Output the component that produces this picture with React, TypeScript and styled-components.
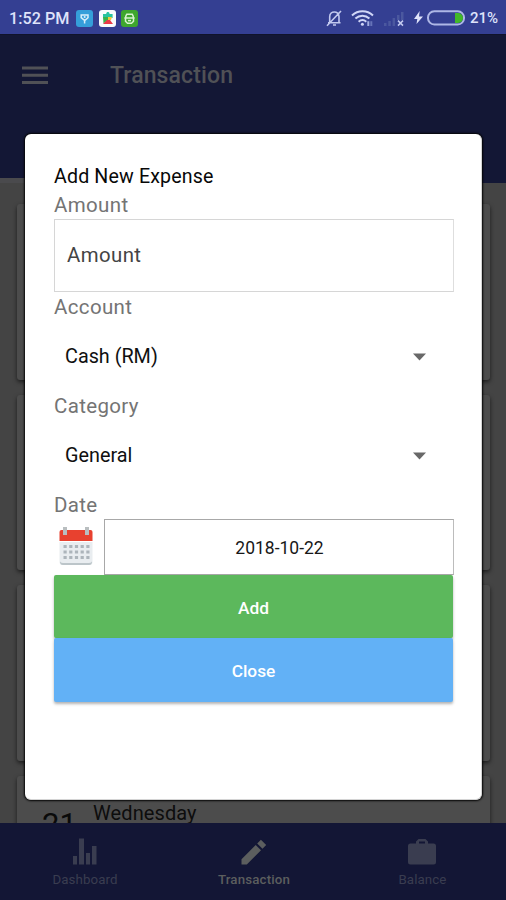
import React from "react";
import styled, { createGlobalStyle } from "styled-components";

const GlobalStyle = createGlobalStyle`
  * { box-sizing: border-box; }
  html, body { margin: 0; padding: 0; }
  body { font-family: Roboto, sans-serif; overflow: hidden; }
`;

const Screen = styled.div`
  position: relative;
  width: 506px;
  height: 900px;
  overflow: hidden;
  display: flex;
  flex-direction: column;
  background: #444444;
`;

const StatusBar = styled.header`
  height: 34px;
  flex: none;
  display: flex;
  align-items: center;
  padding: 2px 8px 0 9px;
  background: #343f92;
  color: #dfe3fa;
`;

const Clock = styled.span`
  width: 67px;
  font-size: 16.2px;
  font-weight: 500;
  white-space: nowrap;
`;

const AppBadge = styled.svg`
  width: 17px;
  height: 17px;
  margin-right: 5.5px;
  flex: none;
`;

const StatusIcons = styled.div`
  margin-left: auto;
  display: flex;
  align-items: center;
`;

const StatusGlyph = styled.svg<{ $w: number; $gap: number }>`
  width: ${(p) => p.$w}px;
  height: 18px;
  margin-right: ${(p) => p.$gap}px;
  flex: none;
`;

const Percent = styled.span`
  width: 28px;
  font-size: 15px;
  font-weight: 500;
  white-space: nowrap;
`;

const AppBar = styled.div`
  height: 149px;
  flex: none;
  display: flex;
  flex-direction: column;
  justify-content: space-between;
  background: #131735;
  border-top: 1px solid #10132b;
`;

const TitleRow = styled.div`
  display: flex;
  align-items: center;
  height: 80px;
  padding-left: 22px;
`;

const MenuIcon = styled.svg`
  width: 26px;
  height: 20px;
  margin-right: 62px;
`;

const Title = styled.h1`
  margin: 0;
  font-size: 23px;
  font-weight: 500;
  letter-spacing: 0.12px;
  color: #505156;
`;

const TabIndicator = styled.div`
  width: 253px;
  height: 5px;
  background: #4a4a4d;
`;

const CardList = styled.main`
  flex: 1;
  min-height: 0;
  overflow: hidden;
  display: flex;
  flex-direction: column;
  gap: 15px;
  padding: 21px 16px 0 17px;
`;

const DayCard = styled.section`
  height: 175.5px;
  flex: none;
  display: flex;
  padding: 25px;
  border-radius: 3px;
  background: #4c4c4c;
  box-shadow: 0 2px 4px rgba(0, 0, 0, 0.6);
`;

const DayNumber = styled.span`
  width: 51px;
  font-size: 31px;
  line-height: 48px;
  color: #0a0a0a;
`;

const DayName = styled.span`
  font-size: 20px;
  line-height: 25px;
  letter-spacing: 0.1px;
  color: #0d0d0d;
`;

const BottomNav = styled.nav`
  height: 77px;
  flex: none;
  display: grid;
  grid-template-columns: 85px 1fr 84px;
  background: #131635;
  padding: 0 41.5px 0 42.5px;
`;

const NavItem = styled.div<{ $active?: boolean }>`
  display: flex;
  flex-direction: column;
  align-items: center;
  justify-self: center;
  padding-top: 13px;
  color: ${(p) => (p.$active ? "#5c5e5e" : "#3a3d50")};
  font-size: 13.3px;
  font-weight: ${(p) => (p.$active ? 500 : 400)};
  letter-spacing: ${(p) => (p.$active ? "0.15px" : "0.1px")};
  line-height: 20px;

  svg {
    width: 34px;
    height: 34px;
    display: block;
    fill: currentColor;
  }
`;

const Dialog = styled.div`
  position: absolute;
  left: 25px;
  top: 134px;
  width: 457px;
  height: 666px;
  display: flex;
  flex-direction: column;
  padding: 29px 29px 0;
  background: #fff;
  border: 1px solid #d4d4d4;
  border-width: 0 1px 1px 0;
  border-radius: 6px;
  box-shadow: 0 0 2px 1px #050505;
`;

const DialogTitle = styled.h2`
  margin: 0;
  font-size: 19.6px;
  font-weight: 400;
  line-height: 28px;
  letter-spacing: 0.15px;
  color: #080808;
`;

const Label = styled.label`
  font-size: 20.5px;
  line-height: 28px;
  letter-spacing: 0.35px;
  color: #747474;
`;

const AmountInput = styled.input`
  width: 400px;
  height: 73px;
  margin: 0 0 1px;
  padding: 0 12px 2px;
  border: 1px solid #d6d6d6;
  border-right-color: #dedede;
  border-radius: 0;
  outline: none;
  background: #fff;
  font: 400 20.4px Roboto, sans-serif;
  letter-spacing: 0.4px;
  color: #444;

  &::placeholder {
    color: #444;
    opacity: 1;
  }
`;

const Picker = styled.div`
  display: flex;
  align-items: center;
  justify-content: space-between;
  height: 71px;
  padding: 0 26px 0 11px;
  font-size: 19.8px;
  color: #101010;

  svg {
    width: 13px;
    height: 8px;
    fill: #686868;
  }
`;

const DateRow = styled.div`
  display: flex;
  width: 400px;
  height: 56px;
`;

const CalendarIcon = styled.svg`
  width: 36px;
  height: 42px;
  margin: 7px 10px 0 4px;
  flex: none;
`;

const DateField = styled.div`
  flex: 1;
  display: flex;
  align-items: center;
  justify-content: center;
  padding: 1px 0 0 1px;
  border: 1px solid #a8a8a8;
  border-right-color: #bcbcbc;
  font-size: 17.5px;
  color: #181818;
`;

const ActionButton = styled.button<{ $color: string; $h: number }>`
  width: 399px;
  height: ${(p) => p.$h}px;
  padding: 2px 0 0;
  border: 0;
  border-radius: 2px;
  background: ${(p) => p.$color};
  box-shadow: 0 2px 3px rgba(0, 0, 0, 0.3);
  color: #fff;
  font: 500 17.3px Roboto, sans-serif;
`;

const Caret = () => (
  <svg viewBox="0 0 13 8"><path d="M0 .5h13L6.5 7.5z" /></svg>
);

export default function App() {
  return (
    <>
      <GlobalStyle />
      <Screen>
        <StatusBar>
          <Clock>1:52 PM</Clock>
          <AppBadge viewBox="0 0 17 17">
            <rect width="17" height="17" rx="3" fill="#359fda" />
            <path d="M5.2 5h6.8v2.700L8.700 10.500 5.200 7.700zM8.600 10v3.500" fill="none" stroke="#d9effb" strokeWidth="1.5" />
            <circle cx="8.7" cy="7" r="1" fill="#d9effb" />
          </AppBadge>
          <AppBadge viewBox="0 0 17 17">
            <rect width="17" height="17" rx="3" fill="#f8fbfc" />
            <path d="M4 4h3.200c0-2.600 3.400-2.600 3.400 0h3v4H4z" fill="#27c3a0" />
            <path d="M4 7h5v3l-4.500 3.500z" fill="#36b34a" />
            <path d="M9 7h4l-1 3-3 1z" fill="#f2c53c" />
            <path d="M4 14l4-4h3l3 4z" fill="#e83b48" />
          </AppBadge>
          <AppBadge viewBox="0 0 17 17">
            <rect width="17" height="17" rx="3" fill="#3ea62e" />
            <path d="M4.800 7.600V6.200l1-2h5.400l1 2v1.400M3.300 8h10.400M4.500 8v3.200l2 2h4l2-2V8" fill="none" stroke="#d8f2d0" strokeWidth="1.5" />
            <path d="M7 10.600h3" stroke="#d8f2d0" strokeWidth="1.5" />
          </AppBadge>
          <StatusIcons>
            <StatusGlyph $w={17} $gap={9} viewBox="0 0 17 18" fill="none" stroke="#c2c9ef" strokeWidth="1.6">
              <path d="M4.700 13.200V7.700C4.700 1.500 14 1.500 14 7.700v5.500M3 13.800h12.500M2 16.800L16 2M8 16h3" />
            </StatusGlyph>
            <StatusGlyph $w={23} $gap={10} viewBox="0 0 23 18" fill="none" stroke="#d0d6f7" strokeWidth="2">
              <path d="M1 6.400C7 .8 16 .8 22 6.400M4.400 9.500c4-3.700 10-3.700 14 0M7.600 12.700c2.300-2 5.400-2 7.700 0" />
              <circle cx="11.4" cy="15.2" r="1.5" fill="#d0d6f7" stroke="none" />
              <path d="M17.300 12.200V17" stroke="#a4afe2" />
              <path d="M20.300 12.200V17" stroke="#6673b8" />
            </StatusGlyph>
            <StatusGlyph $w={21} $gap={9} viewBox="0 0 21 18">
              <path d="M0 14h2.500v3H0zM4.300 12h2.500v5H4.300zM8.600 9h2.500v8H8.600zM13 6h2.500v5H13zM17 3h2.500v8H17z" fill="#4b589f" />
              <path d="M14 11.600l5 5M19 11.600l-5 5" stroke="#c2c9ef" strokeWidth="1.5" />
            </StatusGlyph>
            <StatusGlyph $w={9} $gap={4} viewBox="0 0 9 18">
              <path d="M5.700 2L0 10h3.300L2.500 15 9 7.600H5z" fill="#dfe3fa" />
            </StatusGlyph>
            <StatusGlyph $w={38} $gap={5} viewBox="0 0 38 18">
              <rect x="1" y="2.300" width="36" height="13.200" rx="6.300" fill="none" stroke="#aeb7e6" strokeWidth="2" />
              <path d="M28 4h3a5 5 0 0 1 0 10h-3z" fill="#42b928" />
            </StatusGlyph>
            <Percent>21%</Percent>
          </StatusIcons>
        </StatusBar>

        <AppBar>
          <TitleRow>
            <MenuIcon viewBox="0 0 26 20" stroke="#505156" strokeWidth="3">
              <path d="M0 3h26M0 10.300h26M0 17.600h26" />
            </MenuIcon>
            <Title>Transaction</Title>
          </TitleRow>
          <TabIndicator />
        </AppBar>

        <CardList>
          <DayCard />
          <DayCard />
          <DayCard />
          <DayCard>
            <DayNumber>21</DayNumber>
            <DayName>Wednesday</DayName>
          </DayCard>
        </CardList>

        <BottomNav>
          <NavItem>
            <svg viewBox="0 0 34 34"><path d="M5 20h4v8.500H5zM11 2.500h5v26h-5zM18 17h4v11.500h-4zM24 10h4.500v18.500H24z" /></svg>
            Dashboard
          </NavItem>
          <NavItem $active>
            <svg viewBox="0 0 34 34"><path d="M4.500 23.200V28.500h5.300L24 14.300 18.700 9zM20.200 7.500l5.300 5.300 3.700-3.700-5.300-5.300z" /></svg>
            Transaction
          </NavItem>
          <NavItem>
            <svg viewBox="0 0 34 34"><path fillRule="evenodd" d="M11 7.500V5.500l2.500-2.500h7L23 5.500v2h5.500Q31 7.500 31 10v16q0 2.500-2.500 2.500h-23Q3 28.500 3 26V10q0-2.500 2.500-2.500zM14 5.500v2h6v-2z" /></svg>
            Balance
          </NavItem>
        </BottomNav>

        <Dialog role="dialog">
          <DialogTitle>Add New Expense</DialogTitle>
          <Label>Amount</Label>
          <AmountInput placeholder="Amount" />
          <Label>Account</Label>
          <Picker>Cash (RM)<Caret /></Picker>
          <Label>Category</Label>
          <Picker>General<Caret /></Picker>
          <Label>Date</Label>
          <DateRow>
            <CalendarIcon viewBox="0 0 36 42">
              <path d="M1.500 16h33v20q0 3-3 3h-27q-3 0-3-3z" fill="#e9edf0" />
              <path d="M2 35.500q0 3.500 3 3.500h26q3 0 3-3.500-1.500 1.500-3 1.500H5q-1.500 0-3-1.500z" fill="#bcc5c9" />
              <path d="M1.500 15V6q0-2 2-2h29q2 0 2 2v9z" fill="#e8412f" />
              <path d="M5 1h4v8H5zM27 1h4v8h-4z" fill="#b9bec0" />
              <path d="M5.500 20.500h27M5.500 26h27M5.500 31.500h27" stroke="#adb5bb" strokeWidth="3.200" strokeDasharray="3.200 2.500" />
            </CalendarIcon>
            <DateField>2018-10-22</DateField>
          </DateRow>
          <ActionButton $color="#5cb85c" $h={63}>Add</ActionButton>
          <ActionButton $color="#62b1f6" $h={64}>Close</ActionButton>
        </Dialog>
      </Screen>
    </>
  );
}
